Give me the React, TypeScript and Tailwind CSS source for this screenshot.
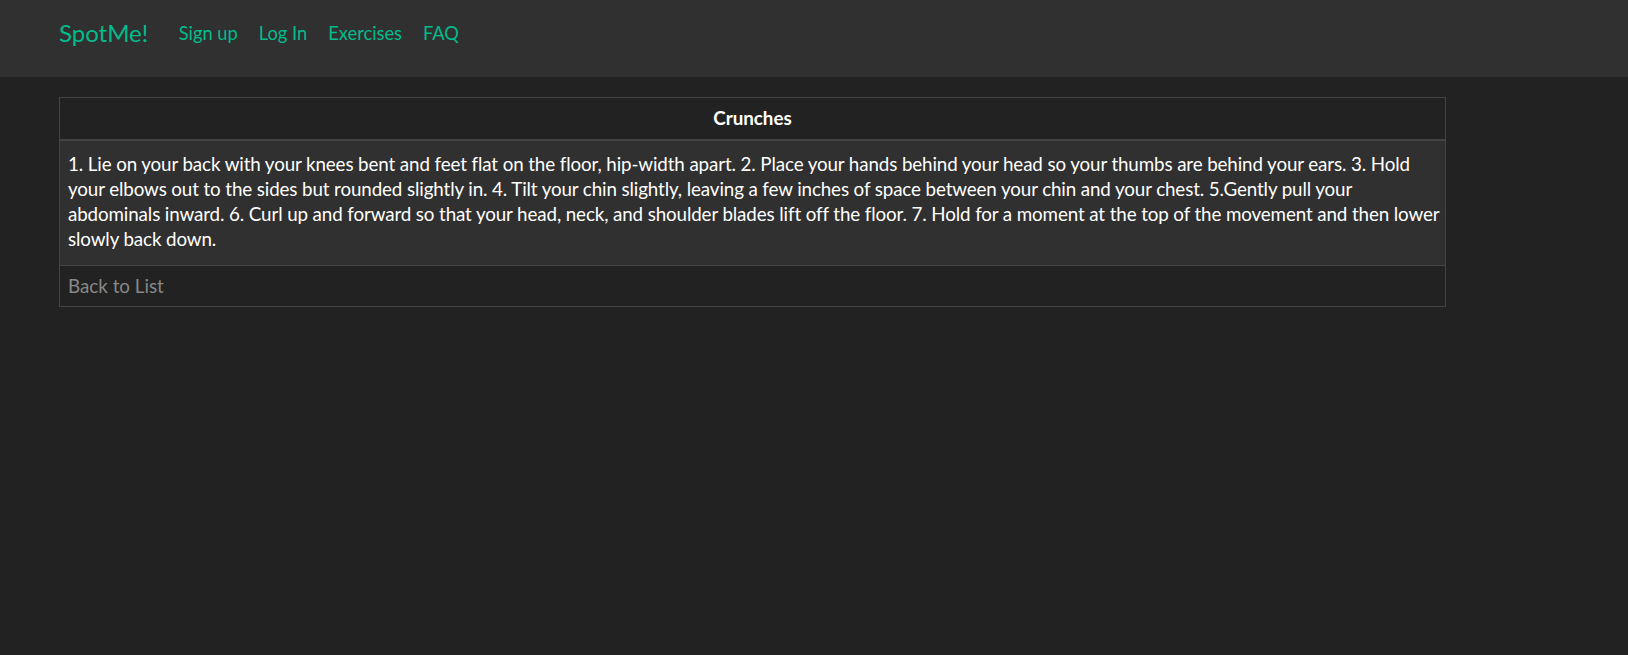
const steps =
  "1. Lie on your back with your knees bent and feet flat on the floor, hip-width apart. 2. Place your hands behind your head so your thumbs are behind your ears. 3. Hold your elbows out to the sides but rounded slightly in. 4. Tilt your chin slightly, leaving a few inches of space between your chin and your chest. 5.Gently pull your abdominals inward. 6. Curl up and forward so that your head, neck, and shoulder blades lift off the floor. 7. Hold for a moment at the top of the movement and then lower slowly back down.";

const links = ["Sign up", "Log In", "Exercises", "FAQ"];

export default function App() {
  return (
    <div className="min-h-screen bg-[#222222] font-['Lato','Liberation_Sans',sans-serif] text-white">
      <nav className="h-[77px] bg-[#303030] flex items-start pt-[18px] pl-[59px]">
        <a href="#" className="text-[24px] leading-[30px] text-[#00bc8c] mr-[20px]">
          SpotMe!
        </a>
        <ul className="flex">
          {links.map((l) => (
            <li key={l}>
              <a href="#" className="block px-[10.5px] text-[18.3px] leading-[30px] text-[#00bc8c]">
                {l}
              </a>
            </li>
          ))}
        </ul>
      </nav>

      <div className="pt-[20px] pl-[59px]">
        <table className="w-[1387px] border border-[#444444] border-collapse text-[18.8px] leading-[25px]">
          <thead>
            <tr className="bg-[#222222] border-b-2 border-[#444444]">
              <th className="pt-[7px] pb-[9px] px-2 text-center font-bold">Crunches</th>
            </tr>
          </thead>
          <tbody>
            <tr className="bg-[#303030] border-b border-[#444444]">
              <td className="pt-[10px] pb-[14px] pl-[8px] pr-[2px] text-left tracking-[-0.12px]">{steps}</td>
            </tr>
            <tr className="bg-[#222222]">
              <td className="pt-[7px] pb-[8px] px-2">
                <a href="#" className="text-[#888888]">
                  Back to List
                </a>
              </td>
            </tr>
          </tbody>
        </table>
      </div>
    </div>
  );
}
